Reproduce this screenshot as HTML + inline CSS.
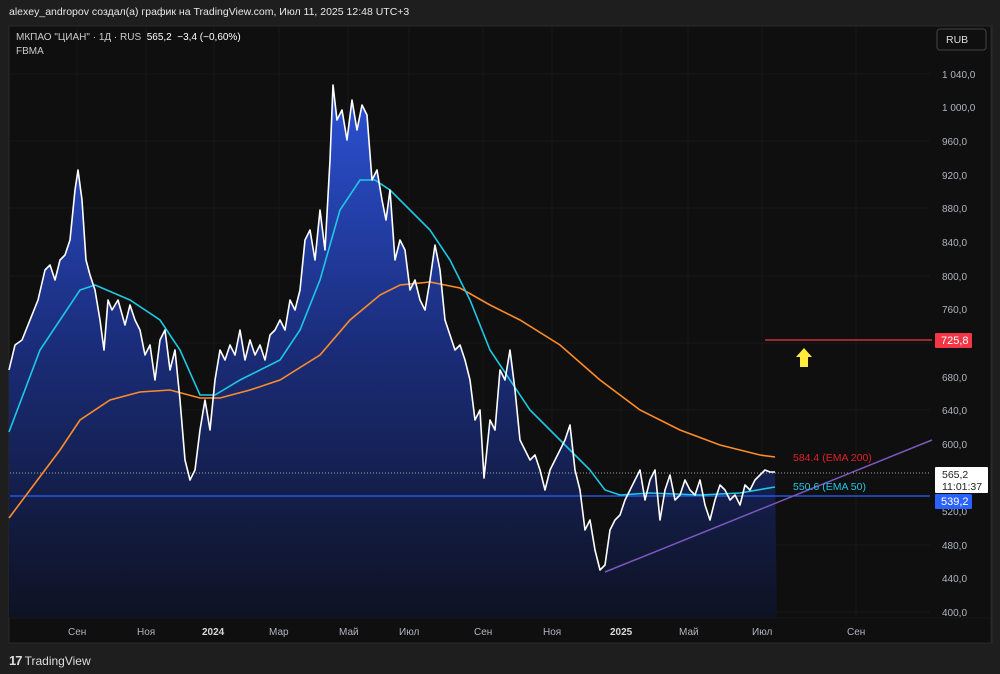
<!DOCTYPE html>
<html><head><meta charset="utf-8"><style>
body{margin:0;width:1000px;height:674px;background:#1e1e1e;font-family:"Liberation Sans","DejaVu Sans",sans-serif;overflow:hidden;position:relative}
.t{position:absolute;white-space:nowrap}
</style></head><body>
<div class="t" style="left:9px;top:6px;font-size:10.5px;color:#e8e8e8">alexey_andropov создал(а) график на TradingView.com, Июл 11, 2025 12:48 UTC+3</div>
<svg style="position:absolute;left:0;top:0" width="1000" height="674">
<defs><linearGradient id="g" x1="0" y1="0" x2="0" y2="1"><stop offset="0" stop-color="#2c52d6"/><stop offset="0.5" stop-color="#1a2c78"/><stop offset="1" stop-color="#0e1222"/></linearGradient></defs>
<rect x="9" y="26" width="983" height="617" fill="#0f0f0f" stroke="#2a2a2a"/>
<g stroke="#171717">
<line x1="77" y1="27" x2="77" y2="618"/><line x1="146" y1="27" x2="146" y2="618"/><line x1="214" y1="27" x2="214" y2="618"/><line x1="279" y1="27" x2="279" y2="618"/><line x1="348" y1="27" x2="348" y2="618"/><line x1="409" y1="27" x2="409" y2="618"/><line x1="483" y1="27" x2="483" y2="618"/><line x1="552" y1="27" x2="552" y2="618"/><line x1="621" y1="27" x2="621" y2="618"/><line x1="688" y1="27" x2="688" y2="618"/><line x1="762" y1="27" x2="762" y2="618"/><line x1="856" y1="27" x2="856" y2="618"/>
<line x1="10" y1="74" x2="930" y2="74"/><line x1="10" y1="141" x2="930" y2="141"/><line x1="10" y1="208" x2="930" y2="208"/><line x1="10" y1="276" x2="930" y2="276"/><line x1="10" y1="343" x2="930" y2="343"/><line x1="10" y1="410" x2="930" y2="410"/><line x1="10" y1="477" x2="930" y2="477"/><line x1="10" y1="545" x2="930" y2="545"/><line x1="10" y1="612" x2="930" y2="612"/>
</g>
<polygon fill="url(#g)" points="9,618 9,370 15,345 22,340 30,320 38,300 45,270 50,265 55,280 60,260 65,255 70,240 75,190 78,170 82,200 86,260 90,275 95,290 100,320 104,350 108,300 112,310 118,300 125,325 130,305 135,320 140,330 145,355 150,345 155,380 160,340 165,330 170,370 175,350 180,400 185,460 190,480 195,470 200,430 205,400 210,430 215,380 220,350 225,360 230,345 235,355 240,330 245,360 250,340 255,355 260,345 265,360 270,335 275,330 280,320 285,330 290,300 295,310 300,290 305,240 310,230 315,260 320,210 325,250 330,160 333,85 337,120 342,110 347,140 352,100 357,130 362,105 367,115 372,180 377,170 382,200 386,220 390,190 395,260 400,240 405,250 410,290 415,280 420,300 425,310 430,280 435,245 440,270 445,320 450,335 455,350 460,345 465,360 470,380 475,420 480,410 484,478 490,420 495,430 500,370 505,380 510,350 515,390 520,440 525,450 530,460 535,455 540,470 545,490 550,470 555,460 560,450 565,440 570,425 575,470 580,490 585,530 590,520 595,550 600,570 605,565 610,530 615,520 620,515 625,500 630,490 635,480 640,470 645,500 650,480 655,470 660,520 665,490 670,475 675,500 680,495 685,480 690,490 695,495 700,480 705,505 710,520 715,500 720,485 725,490 730,500 735,495 740,505 745,485 750,490 755,480 760,475 765,470 770,472 775,472 777,618"/>
<line x1="10" y1="496" x2="930" y2="496" stroke="#2962ff" stroke-width="1.3"/>
<line x1="10" y1="473" x2="930" y2="473" stroke="#aaa" stroke-dasharray="1,2"/>
<line x1="765" y1="340" x2="932" y2="340" stroke="#f23645" stroke-width="1.3"/>
<line x1="605" y1="572" x2="932" y2="440" stroke="#7e57c2" stroke-width="1.5"/>
<polyline fill="none" stroke="#ff8c2a" stroke-width="1.6" points="9,518 30,490 60,450 80,420 110,400 140,392 170,390 200,398 220,398 250,390 280,380 320,355 350,320 380,295 400,285 430,282 460,288 490,305 520,320 560,345 600,380 640,410 680,430 720,445 760,455 775,457"/>
<polyline fill="none" stroke="#1ec8e6" stroke-width="1.6" points="9,432 40,350 80,290 95,285 130,300 160,320 180,350 200,395 215,395 240,380 280,360 300,330 320,280 340,210 360,180 375,180 390,190 410,210 430,230 450,260 470,300 490,350 510,380 530,410 560,440 590,470 605,490 620,495 650,493 700,495 740,493 775,487"/>
<polyline fill="none" stroke="#fff" stroke-width="1.6" stroke-linejoin="round" points="9,370 15,345 22,340 30,320 38,300 45,270 50,265 55,280 60,260 65,255 70,240 75,190 78,170 82,200 86,260 90,275 95,290 100,320 104,350 108,300 112,310 118,300 125,325 130,305 135,320 140,330 145,355 150,345 155,380 160,340 165,330 170,370 175,350 180,400 185,460 190,480 195,470 200,430 205,400 210,430 215,380 220,350 225,360 230,345 235,355 240,330 245,360 250,340 255,355 260,345 265,360 270,335 275,330 280,320 285,330 290,300 295,310 300,290 305,240 310,230 315,260 320,210 325,250 330,160 333,85 337,120 342,110 347,140 352,100 357,130 362,105 367,115 372,180 377,170 382,200 386,220 390,190 395,260 400,240 405,250 410,290 415,280 420,300 425,310 430,280 435,245 440,270 445,320 450,335 455,350 460,345 465,360 470,380 475,420 480,410 484,478 490,420 495,430 500,370 505,380 510,350 515,390 520,440 525,450 530,460 535,455 540,470 545,490 550,470 555,460 560,450 565,440 570,425 575,470 580,490 585,530 590,520 595,550 600,570 605,565 610,530 615,520 620,515 625,500 630,490 635,480 640,470 645,500 650,480 655,470 660,520 665,490 670,475 675,500 680,495 685,480 690,490 695,495 700,480 705,505 710,520 715,500 720,485 725,490 730,500 735,495 740,505 745,485 750,490 755,480 760,475 765,470 770,472 775,472"/>
<polygon fill="#ffeb3b" points="804,348 796,357 800,357 800,367 808,367 808,357 812,357"/>
<line x1="991" y1="27" x2="991" y2="643" stroke="#2a2a2a"/>
<line x1="10" y1="618" x2="991" y2="618" stroke="#171717"/>
<g font-size="10" fill="#b2b5be" font-family="Liberation Sans,sans-serif">
<text x="942" y="78">1 040,0</text><text x="942" y="111">1 000,0</text><text x="942" y="145">960,0</text><text x="942" y="179">920,0</text><text x="942" y="212">880,0</text><text x="942" y="246">840,0</text><text x="942" y="280">800,0</text><text x="942" y="313">760,0</text><text x="942" y="381">680,0</text><text x="942" y="414">640,0</text><text x="942" y="448">600,0</text><text x="942" y="515">520,0</text><text x="942" y="549">480,0</text><text x="942" y="582">440,0</text><text x="942" y="616">400,0</text>
<text x="68" y="635">Сен</text><text x="137" y="635">Ноя</text><text x="202" y="635" font-weight="bold" fill="#d8d8d8">2024</text><text x="269" y="635">Мар</text><text x="339" y="635">Май</text><text x="399" y="635">Июл</text><text x="474" y="635">Сен</text><text x="543" y="635">Ноя</text><text x="610" y="635" font-weight="bold" fill="#d8d8d8">2025</text><text x="679" y="635">Май</text><text x="752" y="635">Июл</text><text x="847" y="635">Сен</text>
</g>
<rect x="935" y="333" width="37" height="15" fill="#f23645" rx="1"/><text x="941" y="344" font-size="11" fill="#fff">725,8</text>
<rect x="935" y="467" width="53" height="26" fill="#fff" rx="1"/><text x="942" y="478" font-size="10.5" fill="#222">565,2</text><text x="942" y="490" font-size="10.5" fill="#222">11:01:37</text>
<rect x="935" y="494" width="37" height="15" fill="#2962ff" rx="1"/><text x="941" y="505" font-size="11" fill="#fff">539,2</text>
<text x="793" y="461" font-size="10.5" fill="#e0202a">584.4 (EMA 200)</text>
<text x="793" y="490" font-size="10.5" fill="#1ec8e6">550.6 (EMA 50)</text>
<rect x="937" y="29" width="49" height="21" fill="none" stroke="#444" rx="3"/><text x="946" y="43" font-size="10.5" fill="#ddd">RUB</text>
</g>
</svg>
<div class="t" style="left:16px;top:32px;font-size:10px;color:#ccc">МКПАО "ЦИАН" · 1Д · RUS &nbsp;<span style="color:#fff">565,2 &nbsp;−3,4 (−0,60%)</span></div>
<div class="t" style="left:16px;top:46px;font-size:10px;color:#ccc">FBMA</div>
<div class="t" style="left:9px;top:653px;font-size:12px;color:#ddd"><b style="font-size:13px;letter-spacing:-1px">17</b> TradingView</div>
</body></html>
